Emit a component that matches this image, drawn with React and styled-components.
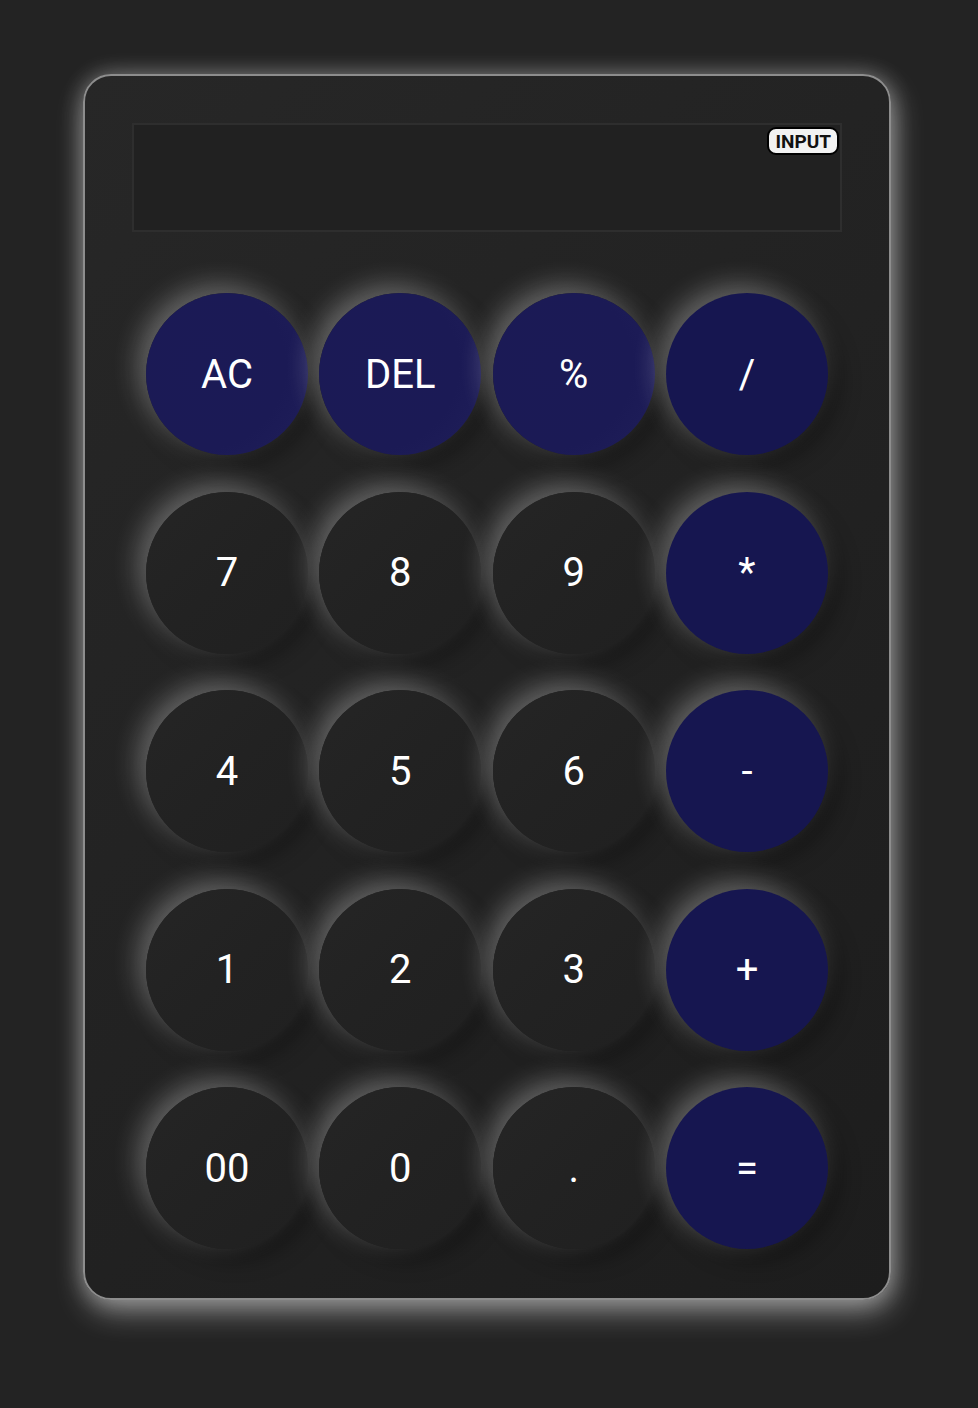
import React from "react";
import styled, { createGlobalStyle, css } from "styled-components";

const GlobalStyle = createGlobalStyle`
  html, body {
    margin: 0;
    padding: 0;
    background: #232323;
    font-family: Roboto, "Liberation Sans", sans-serif;
  }
  body {
    min-height: 1408px;
  }
  * { box-sizing: border-box; }
`;

const Page = styled.div`
  padding: 74px 0 0 83px;
`;

const Card = styled.div`
  width: 808px;
  height: 1226px;
  border: 2px solid #8d8d8d;
  border-radius: 28px;
  background: linear-gradient(135deg, #272727 0%, #222222 50%, #1d1d1d 100%);
  box-shadow: 0 0 22px rgba(255, 255, 255, 0.3), 3px 12px 30px rgba(255, 255, 255, 0.42);
  padding: 47px 47px 49px;
  display: flex;
  flex-direction: column;
`;

const Display = styled.div`
  position: relative;
  height: 109px;
  border: 2px solid #2e2e2e;
  background: #212121;
`;

const Badge = styled.span`
  position: absolute;
  top: 2px;
  right: 1px;
  height: 28px;
  padding: 0 6px;
  display: flex;
  align-items: center;
  border: 2px solid #000;
  border-radius: 9px;
  background: #f2f2f2;
  color: #111;
  font-family: Roboto, "Liberation Sans", sans-serif;
  font-weight: 700;
  font-size: 19px;
  line-height: 1;
`;

const Keypad = styled.div`
  margin-top: 61px;
  padding: 0 14px;
  display: grid;
  grid-template-columns: repeat(4, 162px);
  justify-content: space-between;
  row-gap: 36.5px;
`;

const variants = {
  top: css`
    background: radial-gradient(circle at 35% 45%, #1b1a56 0%, #1b1a55 60%, #201f5a 100%);
  `,
  op: css`
    background: #161650;
  `,
  num: css`
    background: linear-gradient(135deg, #252525 0%, #222222 50%, #202020 100%);
  `,
};

const Key = styled.button`
  width: 162px;
  height: 162px;
  border-radius: 50%;
  border: none;
  padding: 0;
  display: flex;
  align-items: center;
  justify-content: center;
  color: #ffffff;
  font-family: Roboto, "Liberation Sans", sans-serif;
  font-size: 40px;
  font-weight: 400;
  cursor: pointer;
  box-shadow: -8px -8px 26px rgba(255, 255, 255, 0.3), 8px 8px 24px rgba(0, 0, 0, 0.45);
  ${(p) => variants[p.$kind]}
`;

const keys = [
  ["AC", "top"], ["DEL", "top"], ["%", "top"], ["/", "op"],
  ["7", "num"], ["8", "num"], ["9", "num"], ["*", "op"],
  ["4", "num"], ["5", "num"], ["6", "num"], ["-", "op"],
  ["1", "num"], ["2", "num"], ["3", "num"], ["+", "op"],
  ["00", "num"], ["0", "num"], [".", "num"], ["=", "op"],
];

export default function App() {
  return (
    <>
      <GlobalStyle />
      <Page>
        <Card>
          <Display>
            <Badge>INPUT</Badge>
          </Display>
          <Keypad>
            {keys.map(([label, kind]) => (
              <Key key={label} $kind={kind}>
                {label}
              </Key>
            ))}
          </Keypad>
        </Card>
      </Page>
    </>
  );
}
